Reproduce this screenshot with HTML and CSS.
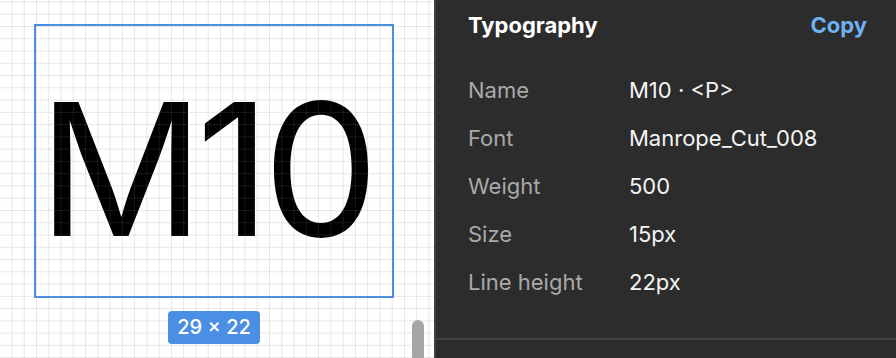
FILE: index.html
```html
<!DOCTYPE html>
<html lang="en">
<head>
<meta charset="utf-8">
<title>Typography inspector</title>
<link rel="stylesheet" href="styles.css">
</head>
<body>
  <div class="app">
    <section class="canvas">
      <div class="stage">
        <div class="frame">
          <div class="glyphs">M10</div>
        </div>
        <div class="badge">29 × 22</div>
      </div>
      <div class="grid"></div>
      <div class="thumb"></div>
    </section>
    <aside class="panel">
      <div class="section">
        <div class="section-head">
          <h2 class="section-title">Typography</h2>
          <span class="copy">Copy</span>
        </div>
        <dl class="props">
          <dt>Name</dt><dd>M10 · &lt;P&gt;</dd>
          <dt>Font</dt><dd>Manrope_Cut_008</dd>
          <dt>Weight</dt><dd>500</dd>
          <dt>Size</dt><dd>15px</dd>
          <dt>Line height</dt><dd>22px</dd>
        </dl>
      </div>
    </aside>
  </div>
</body>
</html>
```

FILE: styles.css
```css
* { box-sizing: border-box; }

html, body {
  margin: 0;
  padding: 0;
  width: 896px;
  height: 358px;
  overflow: hidden;
  font-family: Inter, "Liberation Sans", sans-serif;
}

.app {
  display: flex;
  width: 896px;
  height: 358px;
}

.canvas {
  position: relative;
  width: 434px;
  height: 358px;
  flex: none;
  background: #ffffff;
  overflow: hidden;
}

.stage {
  display: flex;
  flex-direction: column;
  align-items: center;
  width: 360px;
  margin: 24px 0 0 34px;
  gap: 13px;
}

.frame {
  width: 360px;
  height: 274px;
  border: 2px solid #4a90e2;
}

.glyphs {
  padding: 16px 0 0 2px;
  font-family: Inter, "Liberation Sans", sans-serif;
  font-weight: 400;
  font-size: 184px;
  line-height: 254px;
  letter-spacing: -8px;
  color: #000;
  white-space: nowrap;
}

.badge {
  position: relative;
  z-index: 2;
  width: 92px;
  height: 33px;
  border-radius: 4px;
  background: #4a8fe3;
  color: #fff;
  font-size: 20px;
  font-weight: 500;
  line-height: 33px;
  text-align: center;
}

.grid {
  position: absolute;
  inset: 0;
  z-index: 1;
  pointer-events: none;
  background-image:
    linear-gradient(to right, rgba(128,128,128,0.19) 1px, transparent 1px),
    linear-gradient(to bottom, rgba(128,128,128,0.19) 1px, transparent 1px);
  background-size: 12.28px 12.28px;
  background-position: 36px 26px;
}

.thumb {
  position: absolute;
  z-index: 3;
  left: 412px;
  top: 320px;
  width: 12px;
  height: 60px;
  border-radius: 6px;
  background: #a6a6a6;
}

.panel {
  flex: 1;
  height: 358px;
  background: #2c2c2c;
  border-left: 2px solid #404040;
}

.section {
  padding: 11px 29px 32px 32px;
  border-bottom: 2px solid #404040;
}

.section-head {
  display: flex;
  justify-content: space-between;
  align-items: baseline;
  height: 28px;
  margin-bottom: 27px;
}

.section-title {
  margin: 0;
  font-size: 22px;
  font-weight: 700;
  line-height: 28px;
  color: #ffffff;
}

.copy {
  font-size: 22px;
  font-weight: 700;
  line-height: 28px;
  color: #6fb2f2;
}

.props {
  display: grid;
  grid-template-columns: 161px 1fr;
  margin: 0;
  font-size: 22px;
  line-height: 48px;
}

.props dt {
  color: #a9a9a9;
}

.props dd {
  margin: 0;
  color: #f4f4f4;
}
```
